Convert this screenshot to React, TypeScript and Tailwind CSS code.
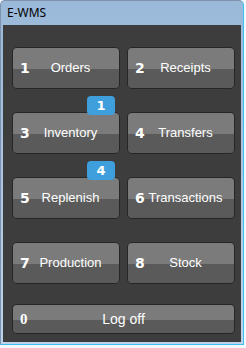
import React from "react";

type Item = { n: string; label: string; badge?: string };

const items: Item[] = [
  { n: "1", label: "Orders" },
  { n: "2", label: "Receipts" },
  { n: "3", label: "Inventory", badge: "1" },
  { n: "4", label: "Transfers" },
  { n: "5", label: "Replenish", badge: "4" },
  { n: "6", label: "Transactions" },
  { n: "7", label: "Production" },
  { n: "8", label: "Stock" },
];

function Btn({ item }: { item: Item }) {
  return (
    <div className="relative h-[42px]">
      <div className="absolute inset-0 rounded-[5px] border border-[#262626] overflow-hidden flex flex-col">
        <div className="h-[52%] bg-[#7b7b7b]" />
        <div className="flex-1 bg-[#5a5a5a]" />
      </div>
      <div className="relative h-full flex items-center pl-[8px] pr-[9px] text-white">
        <span className="w-[10px] text-[14px] font-bold [font-family:'DejaVu_Sans',sans-serif]">{item.n}</span>
        <span className="flex-1 text-center text-[13px] [font-family:'Liberation_Sans',sans-serif]">{item.label}</span>
      </div>
      {item.badge && (
        <div className="absolute right-[5px] top-[-16px] w-[28px] h-[19px] rounded-[4px] bg-[#3f9fdc] text-white flex items-center justify-center text-[13px] font-bold [font-family:'DejaVu_Sans',sans-serif]">
          {item.badge}
        </div>
      )}
    </div>
  );
}

export default function App() {
  return (
    <div className="w-[246px] h-[348px] bg-[#f4f7fb]">
      <div className="w-[244px] h-[345px] border border-[#7d93ad] border-r-[#3cc0ee] border-b-[#3cc0ee] rounded-t-[5px] bg-gradient-to-b from-[#9ab8d8] to-[#bed3ea] flex flex-col">
        <div className="h-[24px] flex items-center pl-[6px] text-[12px] text-black [font-family:'Noto_Sans',sans-serif]">
          E-WMS
        </div>
        <div className="flex-1 mx-[2px] mb-[2px] bg-[#3d3d3d] pt-[22px] pl-[9px] pr-[6px]">
          <div className="grid grid-cols-2 gap-x-[7px] gap-y-[23px]">
            {items.map((it) => (
              <Btn key={it.n} item={it} />
            ))}
          </div>
          <div className="relative h-[30px] mt-[20px]">
            <div className="absolute inset-0 rounded-[5px] border border-[#262626] overflow-hidden flex flex-col">
              <div className="h-[52%] bg-[#7b7b7b]" />
              <div className="flex-1 bg-[#5a5a5a]" />
            </div>
            <div className="relative h-full flex items-center justify-center text-white text-[14px] [font-family:'Liberation_Sans',sans-serif]">
              Log off
            </div>
            <span className="absolute left-[8px] top-0 h-full flex items-center text-white font-bold text-[15px] [font-family:'Liberation_Serif',serif]">0</span>
          </div>
        </div>
      </div>
    </div>
  );
}
